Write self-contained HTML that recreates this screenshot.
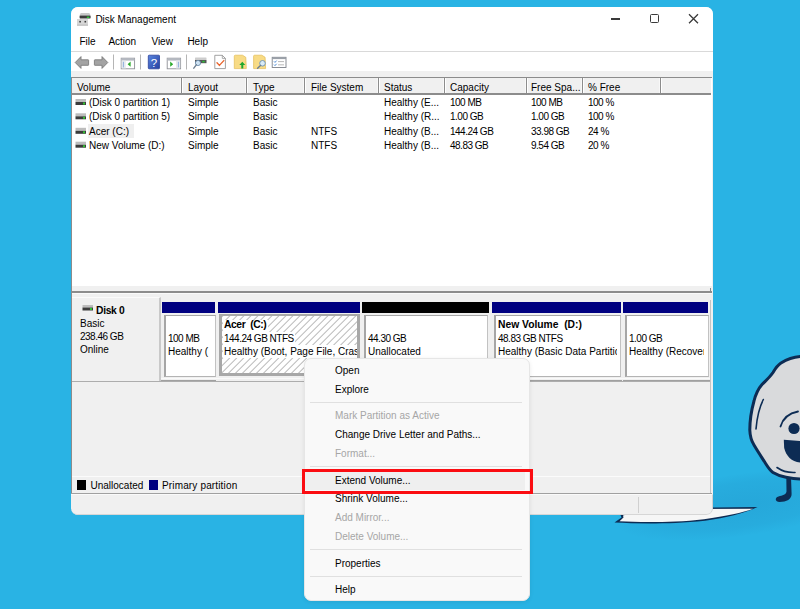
<!DOCTYPE html>
<html><head><meta charset="utf-8">
<style>
html,body{margin:0;padding:0}
body{width:800px;height:609px;position:relative;overflow:hidden;background:#29b3e4;font-family:"Liberation Sans",sans-serif;font-size:10px;color:#000}
.a{position:absolute}
.t{position:absolute;white-space:pre;line-height:12px;height:12px}
.win{position:absolute;left:70.5px;top:7px;width:642.7px;height:508px;background:#f0f0f0;border-radius:7px;overflow:hidden}
.pg{position:absolute;left:-70.5px;top:-7px;width:800px;height:609px}
.hd{position:absolute;top:80.6px;line-height:14px;height:14px;white-space:pre}
.sep{position:absolute;top:78px;width:3px;height:15px;border-left:1px solid #f8f8f8;border-right:1px solid #fff;background:#8c8c8c;box-sizing:border-box}
.r{position:absolute;white-space:pre;line-height:12px;height:12px}
.n{letter-spacing:-0.5px}
.bar{position:absolute;top:302px;height:11px}
.pf{position:absolute;top:313px;height:68px;background:#f0f0f0;box-sizing:border-box;border-bottom:1.2px solid #a0a0a0}
.pi{position:absolute;top:315px;height:62px;background:#fff;border-left:2px solid #a6a6a6;border-top:1.5px solid #a6a6a6;border-right:1.5px solid #c2c2c2;border-bottom:1.5px solid #b4b4b4;box-sizing:border-box;overflow:hidden}
.pt{position:absolute;white-space:pre;line-height:12px;height:12px}
.mi{position:absolute;left:335px;white-space:pre;line-height:12px;height:12px}
.dis{color:#a6a6a6}
.ms{position:absolute;left:310px;width:212px;height:1px;background:#e0e0e0}
.drv{position:absolute;width:11px;height:6px}
</style></head><body>
<!-- halftone shadow -->
<div class="a" style="left:615px;top:474px;width:250px;height:62px;transform:rotate(-8deg);background:radial-gradient(ellipse at 50% 50%, rgba(15,80,140,0.12) 0%, rgba(15,80,140,0.07) 50%, rgba(15,80,140,0) 72%)"></div>
<!-- background paper tail -->
<svg class="a" style="left:0;top:0" width="800" height="609" viewBox="0 0 800 609">
  <path d="M628 508.5 L757.5 507 C746 512.5 728 517.5 705 520.8 C685 523 665 523.5 650 523.5 Q630 523.3 614.5 522.5 L621.5 517.5 L620.5 515 L628 512.5 Z" fill="#0d2c54"/>
  <path d="M628 509.3 L753 508.7 C743 512.5 726 516 704 519.2 C685 521.5 665 522 650 522 Q632 521.8 619.5 521.2 L623.5 517.5 L623 515.5 L630 513.5 Z" fill="#f6f6f6"/>
  <!-- character -->
  <path d="M803 356.5 C798 356.5 790 357.5 781 363 C777 365.5 775 369 773 372.5 C770 377 766.5 380 762 384.5 C758 389 755.5 395 754 401 C751.5 410 749.8 420 749.8 430 C750 436 751.5 441 754 445 C757.5 451 761.5 457 765 462.5 C767.5 466.5 769.5 470 773 472.5 C777 475 781 476.3 786 477.2 C792 478.3 797 479 803 479 Z" fill="#d9dadc" stroke="#0d2c54" stroke-width="3" stroke-linejoin="round"/>
  <path d="M763.3 399.5 C759.5 407 757 417 756 429" fill="none" stroke="#0d2c54" stroke-width="1.6" stroke-linecap="round"/>
  <path d="M780.5 426.5 C783 418 790 413 798 411.5" fill="none" stroke="#0d2c54" stroke-width="1.8" stroke-linecap="round"/>
  <circle cx="794" cy="428.5" r="5.6" fill="#0d2c54"/>
  <path d="M783.8 439.8 L801 441 L801 462.5 C792 462.5 786 456 784.2 448 Z" fill="#0d2c54"/>
  <path d="M777 467.5 C782 471 789 472.8 795 472.5" fill="none" stroke="#0d2c54" stroke-width="1.6" stroke-linecap="round"/>
  <path d="M786.3 477 L791 477 L791.6 494 C791.8 499 786.5 502 779.5 502 C775 502 774.5 497.5 778.5 496.5 C782.5 495.5 786.2 494.5 786.5 491.5 Z" fill="#0d2c54"/>
</svg>
<div class="win"><div class="pg">
  <!-- white top area -->
  <div class="a" style="left:70px;top:7px;width:643px;height:64px;background:#fff"></div>
  <div class="a" style="left:70px;top:51px;width:643px;height:1px;background:#d9d9d9"></div>
  <!-- title icon -->
  <svg class="a" style="left:76px;top:12px" width="16" height="15" viewBox="0 0 16 15">
    <path d="M3.5 3.5 L4.5 1.2 Q4.8 0.9 5.5 0.9 L12.8 0.9 Q13.5 0.9 13.8 1.5 L14.5 3.5 Z" fill="#c9c9c9"/>
    <rect x="3.6" y="3.4" width="11" height="3" rx="0.6" fill="#3b3b3b"/>
    <rect x="10.8" y="4.5" width="2.6" height="1.5" fill="#2fbf3a"/>
    <rect x="1" y="7" width="11" height="6.6" fill="#d6d6d6"/>
    <rect x="1" y="12.6" width="11" height="1" fill="#b8b8b8"/>
    <rect x="3.3" y="8.9" width="1.6" height="1.6" fill="#3a3a3a"/>
    <rect x="8.5" y="8.9" width="1.6" height="1.6" fill="#3a3a3a"/>
  </svg>
  <div class="t" style="left:95.4px;top:13.9px">Disk Management</div>
  <!-- window controls -->
  <div class="a" style="left:611px;top:18.3px;width:9px;height:1.3px;background:#3a3a3a"></div>
  <div class="a" style="left:649.6px;top:14px;width:9.2px;height:9.2px;border:1.3px solid #3a3a3a;border-radius:1.5px;box-sizing:border-box"></div>
  <svg class="a" style="left:688px;top:13px" width="11" height="11" viewBox="0 0 11 11"><path d="M1 1.2L10 10.2M10 1.2L1 10.2" stroke="#3a3a3a" stroke-width="1.3"/></svg>
  <!-- menu -->
  <div class="t" style="left:79.4px;top:36.4px">File</div>
  <div class="t" style="left:108.4px;top:36.4px">Action</div>
  <div class="t" style="left:151.4px;top:36.4px">View</div>
  <div class="t" style="left:187.4px;top:36.4px">Help</div>
  <!-- toolbar -->
  <svg class="a" style="left:70px;top:52px" width="230" height="20" viewBox="70 52 230 20">
    <!-- back -->
    <path d="M75.2 62.5 L81 56.6 L81 59.8 L88.2 59.8 Q88.6 59.8 88.6 60.3 L88.6 64.8 Q88.6 65.3 88.2 65.3 L81 65.3 L81 68.4 Z" fill="#a3a3a3" stroke="#7c7c7c" stroke-width="0.9" stroke-linejoin="round"/>
    <path d="M107.8 62.5 L102 56.6 L102 59.8 L94.8 59.8 Q94.4 59.8 94.4 60.3 L94.4 64.8 Q94.4 65.3 94.8 65.3 L102 65.3 L102 68.4 Z" fill="#a3a3a3" stroke="#7c7c7c" stroke-width="0.9" stroke-linejoin="round"/>
    <rect x="113" y="54.5" width="1" height="15" fill="#b5b5b5"/>
    <!-- console tree -->
    <rect x="121.2" y="58.2" width="13.4" height="10.6" fill="#fff" stroke="#8e9096" stroke-width="0.9"/>
    <rect x="121.2" y="58.2" width="13.4" height="2.4" fill="#b4b8c0"/>
    <rect x="121.6" y="60.6" width="4.2" height="7.8" fill="#e6e9ee"/>
    <path d="M130.6 61.6 L127.6 64.2 L130.6 66.8 Z" fill="#2aaa2a"/>
    <rect x="122.9" y="61.8" width="1" height="5.6" fill="#8fb0dc"/>
    <rect x="140" y="54.5" width="1" height="15" fill="#b5b5b5"/>
    <!-- help -->
    <defs><linearGradient id="hg" x1="0" y1="0" x2="1" y2="1"><stop offset="0" stop-color="#5a86e0"/><stop offset="1" stop-color="#2440a0"/></linearGradient></defs>
    <rect x="148.3" y="55.2" width="11.2" height="13.6" rx="0.8" fill="url(#hg)" stroke="#29409a" stroke-width="0.8"/>
    <text x="154" y="66.6" font-family="Liberation Sans" font-size="11.5" fill="#fff" text-anchor="middle">?</text>
    <!-- action pane -->
    <rect x="167.2" y="58.2" width="13.4" height="10.6" fill="#fff" stroke="#8e9096" stroke-width="0.9"/>
    <rect x="167.2" y="58.2" width="13.4" height="2.4" fill="#b4b8c0"/>
    <rect x="176" y="60.6" width="4.2" height="7.8" fill="#e6e9ee"/>
    <path d="M170.2 61.6 L173.2 64.2 L170.2 66.8 Z" fill="#2aaa2a"/>
    <rect x="177.9" y="61.8" width="1" height="5.6" fill="#8fb0dc"/>
    <rect x="186" y="54.5" width="1" height="15" fill="#b5b5b5"/>
    <!-- connect -->
    <rect x="195" y="57.5" width="11.5" height="2.6" rx="0.6" fill="#cdcdcd"/>
    <rect x="195" y="60" width="11.5" height="3.2" fill="#555"/>
    <rect x="202.3" y="60.8" width="2.4" height="1.6" fill="#2fbf3a"/>
    <circle cx="198" cy="63" r="2.6" fill="#cfe3f3" stroke="#6e8fae" stroke-width="0.9"/>
    <path d="M196.3 64.8 L193.8 68.2" stroke="#6e7f90" stroke-width="1.4" stroke-linecap="round"/>
    <!-- doc check -->
    <path d="M214.8 55.3 L222.3 55.3 L225.4 58.4 L225.4 68.6 L214.8 68.6 Z" fill="#fff" stroke="#8a8a8a" stroke-width="0.8"/>
    <path d="M222.3 55.3 L222.3 58.4 L225.4 58.4" fill="none" stroke="#8a8a8a" stroke-width="0.7"/>
    <path d="M217 62.8 L219.4 65.4 L223.8 60.6" fill="none" stroke="#e8652e" stroke-width="1.4" stroke-linecap="round" stroke-linejoin="round"/>
    <!-- folder up -->
    <path d="M234.3 56.2 Q234.3 55.2 235.3 55.2 L242.5 55.2 L245.8 57.3 L246.3 68.6 L234.3 68.6 Z" fill="#f8db85" stroke="#e2bb55" stroke-width="0.7"/>
    <path d="M242.3 61.8 L245.3 65 L243.3 65 L243.3 68.5 L241.3 68.5 L241.3 65 L239.3 65 Z" fill="#1fa82e"/>
    <!-- folder search -->
    <path d="M253.6 56.2 Q253.6 55.2 254.6 55.2 L261.8 55.2 L265.1 57.3 L265.6 68.6 L253.6 68.6 Z" fill="#f8db85" stroke="#e2bb55" stroke-width="0.7"/>
    <circle cx="262.5" cy="63.3" r="2.8" fill="#d8ebf7" stroke="#6a8eb0" stroke-width="0.9"/>
    <path d="M260.5 65.4 L257.6 68.3" stroke="#6e7f90" stroke-width="1.4" stroke-linecap="round"/>
    <!-- properties -->
    <rect x="272.2" y="57.3" width="13.8" height="10.2" fill="#fff" stroke="#7d828a" stroke-width="0.9"/>
    <rect x="272.2" y="57.3" width="13.8" height="1.8" fill="#9aa0a8"/>
    <path d="M274 61.4 L275 62.4 L276.6 60.6" fill="none" stroke="#3b7fd0" stroke-width="0.9"/>
    <path d="M274 64.6 L275 65.6 L276.6 63.8" fill="none" stroke="#3b7fd0" stroke-width="0.9"/>
    <rect x="278" y="61.2" width="6" height="0.9" fill="#b0b0b0"/>
    <rect x="278" y="64.4" width="6" height="0.9" fill="#b0b0b0"/>
  </svg>
  <!-- list view -->
  <div class="a" style="left:71px;top:77px;width:641px;height:209px;background:#fff"></div>
  <div class="a" style="left:71px;top:77px;width:641px;height:1px;background:#8c8c8c"></div>
  <div class="a" style="left:70px;top:77px;width:2px;height:416px;background:#8c8c8c"></div>
  <div class="a" style="left:72px;top:78px;width:639px;height:15px;background:#f0f0f0"></div>
  <div class="a" style="left:72px;top:93px;width:639px;height:1.5px;background:#8c8c8c"></div>
  <div class="sep" style="left:180px"></div>
  <div class="sep" style="left:245px"></div>
  <div class="sep" style="left:303px"></div>
  <div class="sep" style="left:377px"></div>
  <div class="sep" style="left:443px"></div>
  <div class="sep" style="left:525px"></div>
  <div class="sep" style="left:581px"></div>
  <div class="sep" style="left:659px"></div>
  <div class="hd" style="left:77px">Volume</div>
  <div class="hd" style="left:188px">Layout</div>
  <div class="hd" style="left:253px">Type</div>
  <div class="hd" style="left:311px">File System</div>
  <div class="hd" style="left:384px">Status</div>
  <div class="hd" style="left:450px">Capacity</div>
  <div class="hd" style="left:531px">Free Spa...</div>
  <div class="hd" style="left:588px">% Free</div>
  <!-- rows -->
  <div class="a" style="left:88px;top:124px;width:46px;height:14px;background:#efefef"></div>
  <svg class="a" style="left:75px;top:98px" width="12" height="52" viewBox="0 0 12 52">
    <g id="dv"><rect x="0.5" y="1" width="10.5" height="3" fill="#bdbdbd"/><rect x="0.5" y="4" width="10.5" height="3" fill="#3c3c3c"/><rect x="8" y="4.5" width="2" height="2" fill="#31c331"/></g>
    <use href="#dv" y="14.3"/><use href="#dv" y="28.8"/><use href="#dv" y="42.7"/>
  </svg>
  <div class="r" style="left:89px;top:97px">(Disk 0 partition 1)</div>
  <div class="r" style="left:89px;top:111.1px">(Disk 0 partition 5)</div>
  <div class="r" style="left:89px;top:125.8px">Acer (C:)</div>
  <div class="r" style="left:89px;top:140.2px">New Volume (D:)</div>
  <div class="r" style="left:188px;top:97px">Simple</div>
  <div class="r" style="left:188px;top:111.1px">Simple</div>
  <div class="r" style="left:188px;top:125.8px">Simple</div>
  <div class="r" style="left:188px;top:140.2px">Simple</div>
  <div class="r" style="left:253px;top:97px">Basic</div>
  <div class="r" style="left:253px;top:111.1px">Basic</div>
  <div class="r" style="left:253px;top:125.8px">Basic</div>
  <div class="r" style="left:253px;top:140.2px">Basic</div>
  <div class="r" style="left:311px;top:125.8px">NTFS</div>
  <div class="r" style="left:311px;top:140.2px">NTFS</div>
  <div class="r" style="left:384px;top:97px">Healthy (E...</div>
  <div class="r" style="left:384px;top:111.1px">Healthy (R...</div>
  <div class="r" style="left:384px;top:125.8px">Healthy (B...</div>
  <div class="r" style="left:384px;top:140.2px">Healthy (B...</div>
  <div class="r n" style="left:450px;top:97px">100 MB</div>
  <div class="r n" style="left:450px;top:111.1px">1.00 GB</div>
  <div class="r n" style="left:450px;top:125.8px">144.24 GB</div>
  <div class="r n" style="left:450px;top:140.2px">48.83 GB</div>
  <div class="r n" style="left:531px;top:97px">100 MB</div>
  <div class="r n" style="left:531px;top:111.1px">1.00 GB</div>
  <div class="r n" style="left:531px;top:125.8px">33.98 GB</div>
  <div class="r n" style="left:531px;top:140.2px">9.54 GB</div>
  <div class="r n" style="left:588px;top:97px">100 %</div>
  <div class="r n" style="left:588px;top:111.1px">100 %</div>
  <div class="r n" style="left:588px;top:125.8px">24 %</div>
  <div class="r n" style="left:588px;top:140.2px">20 %</div>
  <!-- splitter / graph pane -->
  <div class="a" style="left:72px;top:291px;width:640px;height:1.5px;background:#8c8c8c"></div>
  <div class="a" style="left:72px;top:293px;width:640px;height:1px;background:#fafafa"></div>
  <!-- disk box -->
  <div class="a" style="left:72px;top:297px;width:89px;height:85px;background:#f0f0f0;border-top:1px solid #fafafa;border-right:2px solid #c9c9c9;border-bottom:1.2px solid #a0a0a0;box-sizing:border-box"></div>
  <svg class="a" style="left:82px;top:304px" width="12" height="8" viewBox="0 0 12 8"><rect x="0.5" y="1" width="10.5" height="2.5" fill="#bdbdbd"/><rect x="0.5" y="3.5" width="10.5" height="3" fill="#3c3c3c"/><rect x="8" y="4" width="2" height="2" fill="#31c331"/></svg>
  <div class="pt" style="left:96px;top:305.3px;font-weight:bold;font-size:10.3px;letter-spacing:-0.3px">Disk 0</div>
  <div class="pt" style="left:80px;top:318px">Basic</div>
  <div class="pt n" style="left:80px;top:331px">238.46 GB</div>
  <div class="pt" style="left:80px;top:344px">Online</div>
  <!-- partitions -->
  <div class="bar" style="left:162px;width:53px;background:#000080"></div>
  <div class="bar" style="left:218px;width:142px;background:#000080"></div>
  <div class="bar" style="left:362px;width:127px;background:#000000"></div>
  <div class="bar" style="left:492px;width:129px;background:#000080"></div>
  <div class="bar" style="left:623px;width:85px;background:#000080"></div>
  <div class="pf" style="left:161px;width:55px"></div>
  <div class="pi" style="left:164px;width:52px"></div>
  <div class="pt n" style="left:168px;top:332.8px">100 MB</div>
  <div class="pt" style="left:168px;top:345.8px">Healthy (</div>
  <div class="a" style="left:219px;top:313.5px;width:141px;height:62.5px;background:#a8a8a8"></div>
  <svg class="a" style="left:221.5px;top:316px" width="135.5" height="57" viewBox="0 0 135.5 57">
    <defs><pattern id="hp" width="4.95" height="4.95" patternUnits="userSpaceOnUse" patternTransform="rotate(45)"><rect width="4.95" height="4.95" fill="#fff"/><rect x="0" y="0" width="0.9" height="4.95" fill="#b2b2b2"/></pattern></defs>
    <rect width="135.5" height="57" fill="url(#hp)"/>
  </svg>
  <div class="pt" style="left:222.5px;top:319.5px;height:12.5px;padding:0 1.5px;background:#fff;font-weight:bold;font-size:10.3px;letter-spacing:-0.4px;line-height:9px">Acer  (C:)</div>
  <div class="pt n" style="left:222.5px;top:332px;height:13px;padding:0 1.5px;background:#fff;line-height:13px">144.24 GB NTFS</div>
  <div class="pt" style="left:222.5px;top:345px;width:134.5px;height:13px;padding:0 0 0 1.5px;box-sizing:border-box;background:#fff;overflow:hidden;line-height:13.8px">Healthy (Boot, Page File, Crash</div>
  <div class="pf" style="left:362px;width:128px"></div>
  <div class="pi" style="left:364px;width:124px"></div>
  <div class="pt n" style="left:368px;top:332.8px">44.30 GB</div>
  <div class="pt" style="left:368px;top:345.8px">Unallocated</div>
  <div class="pf" style="left:492px;width:130px"></div>
  <div class="pi" style="left:494px;width:127px"></div>
  <div class="pt" style="left:498px;top:318.7px;font-weight:bold;font-size:10.3px">New Volume  (D:)</div>
  <div class="pt n" style="left:498px;top:332.8px">48.83 GB NTFS</div>
  <div class="pt" style="left:498px;top:345.8px;width:119px;overflow:hidden">Healthy (Basic Data Partition)</div>
  <div class="pf" style="left:623px;width:87px"></div>
  <div class="pi" style="left:625px;width:84px"></div>
  <div class="pt n" style="left:629px;top:332.8px">1.00 GB</div>
  <div class="pt" style="left:629px;top:345.8px;width:75px;overflow:hidden">Healthy (Recovery Partition)</div>
  <div class="a" style="left:72px;top:380.6px;width:638px;height:1.2px;background:#adadad"></div>
  <div class="a" style="left:161px;top:378.3px;width:549px;height:1px;background:#fafafa"></div>
  <!-- legend -->
  <div class="a" style="left:72px;top:476px;width:639px;height:1px;background:#fbfbfb"></div>
  <div class="a" style="left:72px;top:477px;width:638px;height:16px;background:#f0f0f0;border-right:1px solid #c9c9c9"></div>
  <div class="a" style="left:77px;top:480px;width:9px;height:10px;background:#000"></div>
  <div class="pt" style="left:90.5px;top:480px">Unallocated</div>
  <div class="a" style="left:149px;top:480px;width:9px;height:10px;background:#000080"></div>
  <div class="pt" style="left:162px;top:480px;letter-spacing:0.15px">Primary partition</div>
  <div class="a" style="left:71px;top:493px;width:641px;height:1px;background:#a0a0a0"></div>
  <div class="a" style="left:710px;top:288px;width:1px;height:5px;background:#8c8c8c"></div>
  <div class="a" style="left:710px;top:300px;width:1px;height:193px;background:#c4c4c4"></div>
  <!-- status bar -->
  <div class="a" style="left:70.5px;top:494px;width:642.2px;height:21px;border-top:1.5px solid #fafafa;border-right:1.3px solid #d0d0d0;border-bottom:1.3px solid #d6d6d6;border-radius:0 0 6px 6px;box-sizing:border-box"></div>
  <div class="a" style="left:638px;top:497px;width:1px;height:16px;background:#d0d0d0"></div>
</div></div>
<!-- context menu -->
<div class="a" style="left:304px;top:358px;width:226px;height:243px;background:#f9f9f9;border-radius:7px;box-shadow:0 1px 4px rgba(0,0,0,0.08);border:1px solid #e6e6e6;box-sizing:border-box"></div>
<div class="mi" style="top:365.3px">Open</div>
<div class="mi" style="top:384.4px">Explore</div>
<div class="ms" style="top:402px"></div>
<div class="mi dis" style="top:410.4px">Mark Partition as Active</div>
<div class="mi" style="top:429px">Change Drive Letter and Paths...</div>
<div class="mi dis" style="top:448.2px">Format...</div>
<div class="ms" style="top:466px"></div>
<div class="a" style="left:305px;top:472px;width:220px;height:18px;background:#efefef"></div>
<div class="mi" style="top:474.6px">Extend Volume...</div>
<div class="mi" style="top:493.4px">Shrink Volume...</div>
<div class="mi dis" style="top:512.4px">Add Mirror...</div>
<div class="mi dis" style="top:530.9px">Delete Volume...</div>
<div class="ms" style="top:549px"></div>
<div class="mi" style="top:557.5px">Properties</div>
<div class="ms" style="top:576px"></div>
<div class="mi" style="top:584.1px">Help</div>
<!-- red highlight -->
<div class="a" style="left:301.6px;top:469px;width:231.6px;height:24.8px;border:3.2px solid #fb0d12;border-bottom-width:3px;box-sizing:border-box"></div>
</body></html>
